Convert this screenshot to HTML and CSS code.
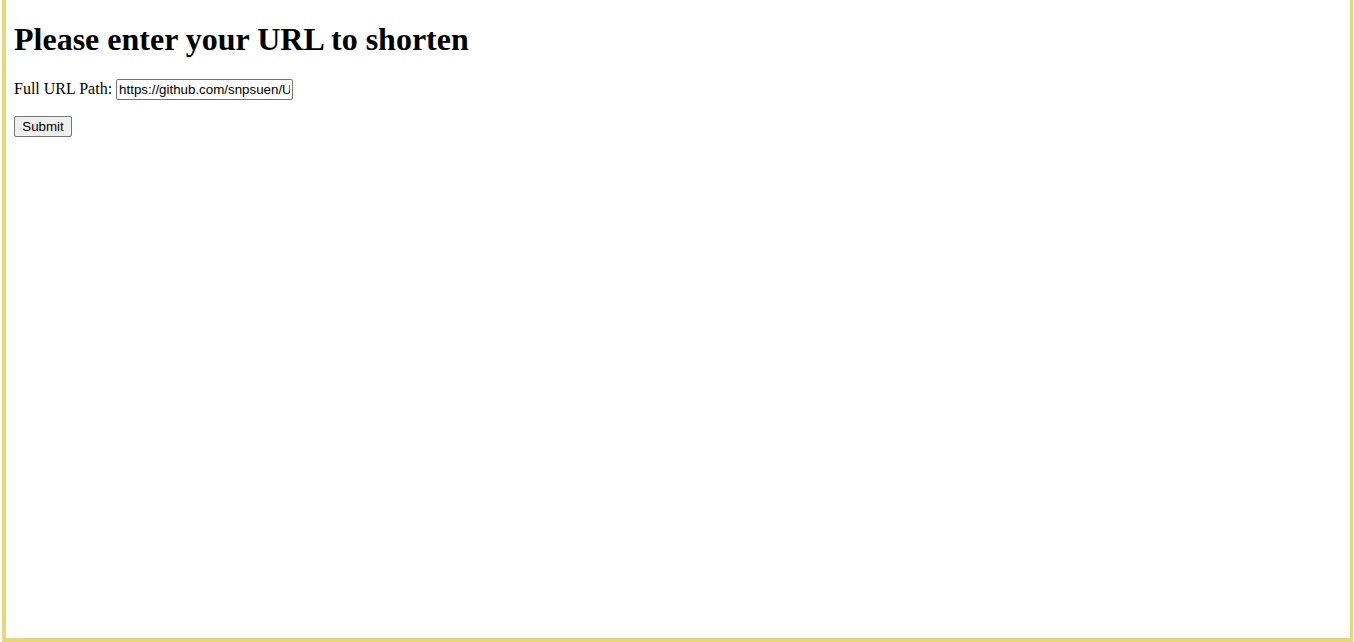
FILE: index.html
```html
<!DOCTYPE html>
<html>
<head>
<meta charset="utf-8">
<title>URL Shortener</title>
<link rel="stylesheet" href="styles.css">
</head>
<body>
<div class="frame">
  <h1 class="title">Please enter your URL to shorten</h1>
  <form class="form">
    <p class="row">
      <label class="label" for="url">Full URL Path:</label>
      <input class="url-input" id="url" type="text" value="https://github.com/snpsuen/URL_Shortener">
    </p>
    <p class="row">
      <button class="submit" type="button">Submit</button>
    </p>
  </form>
</div>
</body>
</html>
```
FILE: styles.css
```css
html, body {
  margin: 0;
  padding: 0;
  height: 100%;
  background: #ffffff;
}
body {
  font-family: "Liberation Serif", "Times New Roman", serif;
  font-size: 16px;
  color: #000;
}
.frame {
  box-sizing: border-box;
  height: 642px;
  margin-left: 2px;
  margin-right: 1px;
  border-left: 4px solid #e8d67c;
  border-right: 3px solid #e8d67c;
  border-bottom: 4px solid #e8d67c;
  padding: 1px 8px 0 8px;
}
.title {
  font-size: 32px;
  font-weight: bold;
  margin: 20px 0 21px 0;
}
.form {
  margin: 0;
}
.row {
  margin: 0 0 16px 0;
}
.url-input {
  font-family: "Liberation Sans", Arial, sans-serif;
  font-size: 13.333px;
  width: 177px;
  height: 21px;
  box-sizing: border-box;
  padding: 1px 2px;
  border: 1px solid #767676;
  border-radius: 2px;
  color: #000;
}
.submit {
  font-family: "Liberation Sans", Arial, sans-serif;
  font-size: 13.333px;
  height: 21px;
  width: 58px;
  padding: 1px 6px;
  background: #efefef;
  border: 1px solid #767676;
  border-radius: 2px;
  color: #000;
}
```
